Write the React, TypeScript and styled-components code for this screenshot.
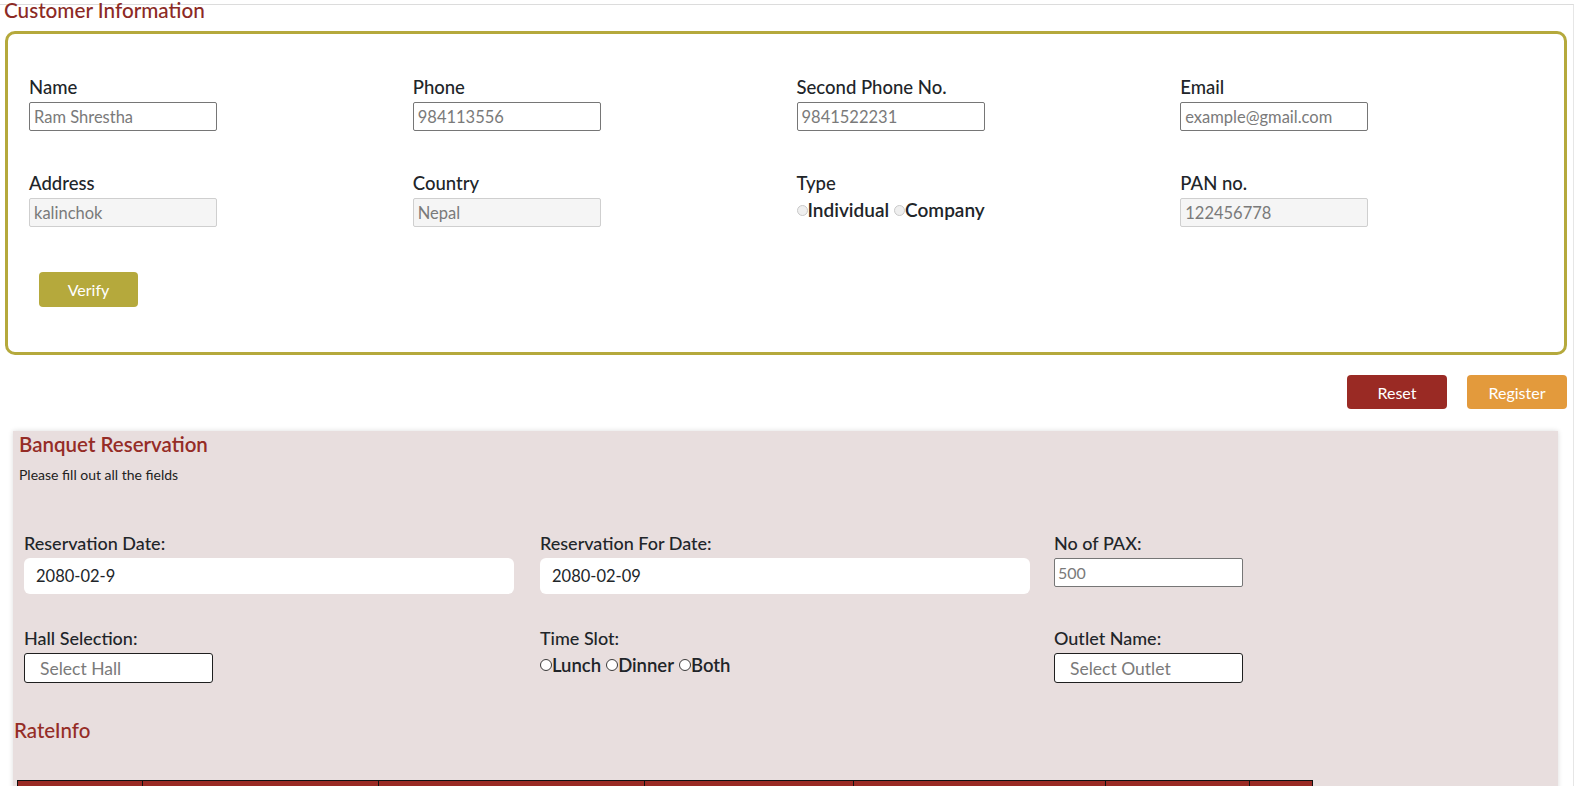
import React from "react";
import styled, { createGlobalStyle, css } from "styled-components";

const GlobalStyle = createGlobalStyle`
  html, body { margin: 0; padding: 0; background: #ffffff; }
  body { font-family: Lato, "Noto Sans", sans-serif; color: #212529; overflow: hidden; }
  * { box-sizing: border-box; }
`;

const Page = styled.div`
  width: 1574px;
  min-height: 782px;
  margin-top: 4px;
  border-top: 1px solid #dcdcdc;
  border-right: 1px solid #e6e6e6;
`;

const PageTitle = styled.h2`
  margin: -5px 0 0 4px;
  font-size: 20.7px;
  line-height: 20px;
  font-weight: 500;
  color: #8c2a25;
`;

const InfoBox = styled.section`
  margin: 11px 0 0 5px;
  width: 1562px;
  border: 3px solid #b5a93c;
  border-radius: 10px;
  padding: 42px 0 45px 21px;
`;

const FieldGrid = styled.div`
  display: grid;
  grid-template-columns: repeat(4, 1fr);
  row-gap: 41px;
`;

const Field = styled.div`
  display: flex;
  flex-direction: column;
  align-items: flex-start;
`;

const Label = styled.label`
  font-size: 18.5px;
  line-height: 22px;
  font-weight: 500;
  color: #212529;
  margin-bottom: 4px;
`;

const TextInput = styled.input<{ $disabled?: boolean }>`
  width: 188px;
  height: 29px;
  padding: 0 4px;
  font-family: inherit;
  font-size: 16.5px;
  border: 1px solid #767676;
  border-radius: 2px;
  background: #fff;
  color: #757575;
  outline: none;
  &::placeholder { color: #7a7a7a; }
  ${(p) =>
    p.$disabled &&
    css`
      background: #f5f5f5;
      border-color: #cfcfcf;
    `}
`;

const RadioRow = styled.div<{ $tight?: boolean }>`
  display: flex;
  align-items: center;
  gap: 5px;
  margin-top: 1px;
`;

const RadioOption = styled.label<{ $size: number }>`
  display: flex;
  align-items: center;
  font-size: ${(p) => p.$size}px;
  font-weight: 600;
  color: #212529;
  line-height: 22px;
`;

const RadioDot = styled.input.attrs({ type: "radio" })<{ $dark?: boolean }>`
  appearance: none;
  width: ${(p) => (p.$dark ? "12px" : "11px")};
  height: ${(p) => (p.$dark ? "12px" : "11px")};
  margin: 0;
  border-radius: 50%;
  border: 1px solid ${(p) => (p.$dark ? "#3a3a3a" : "#c9c9c9")};
  background: ${(p) => (p.$dark ? "#ffffff" : "#efefef")};
`;

const VerifyButton = styled.button`
  margin: 45px 0 0 10px;
  width: 99px;
  height: 35px;
  border: none;
  border-radius: 4px;
  background: #b5a93c;
  color: #fff;
  font-family: inherit;
  font-size: 16px;
`;

const ActionBar = styled.div`
  display: flex;
  justify-content: flex-end;
  gap: 20px;
  width: 1567px;
  margin-top: 20px;
`;

const ActionButton = styled.button<{ $variant: "reset" | "register" }>`
  width: 100px;
  height: 34px;
  border: none;
  border-radius: 4px;
  color: #fff;
  font-family: inherit;
  font-size: 16px;
  background: ${(p) => (p.$variant === "reset" ? "#9a2a24" : "#e39a3c")};
`;

const BanquetCard = styled.section`
  margin: 22px 0 0 13px;
  width: 1545px;
  min-height: 400px;
  background: #e8dede;
  box-shadow: 0 0 5px rgba(0, 0, 0, 0.14);
  padding: 1px 0 0 6px;
`;

const CardTitle = styled.h3`
  margin: 0;
  font-size: 20.5px;
  line-height: 24px;
  font-weight: 600;
  color: #952c26;
`;

const Hint = styled.p`
  margin: 10px 0 0;
  font-size: 14px;
  line-height: 17px;
  color: #222;
`;

const BanquetGrid = styled.div`
  display: grid;
  grid-template-columns: 516px 514px 1fr;
  row-gap: 33px;
  margin: 49px 0 0 5px;
`;

const DateInput = styled.input`
  width: 490px;
  height: 36px;
  border: none;
  border-radius: 6px;
  background: #fff;
  padding: 0 12px;
  font-family: inherit;
  font-size: 16.5px;
  color: #212529;
  outline: none;
`;

const PaxInput = styled.input`
  width: 189px;
  height: 29px;
  border: 1px solid #767676;
  border-radius: 2px;
  background: #fff;
  padding: 0 3px;
  font-family: inherit;
  font-size: 16px;
  color: #777;
  outline: none;
  &::placeholder { color: #7a7a7a; }
`;

const SelectBox = styled.select`
  appearance: none;
  width: 189px;
  height: 30px;
  border: 1px solid #1f1f1f;
  border-radius: 3px;
  background: #fff;
  padding: 0 15px;
  font-family: inherit;
  font-size: 17.5px;
  color: #7a7a7a;
  outline: none;
`;

const BanquetLabel = styled(Label)`
  font-size: 18px;
  margin-bottom: 4px;
`;

const SectionTitle = styled.h3`
  margin: 35px 0 0 -5px;
  font-size: 20.5px;
  line-height: 24px;
  font-weight: 500;
  color: #952c26;
`;

const RateTable = styled.table`
  margin: 38px 0 0 -2px;
  width: 1295px;
  border-collapse: collapse;
  table-layout: fixed;
`;

const HeadCell = styled.th<{ $w: number }>`
  width: ${(p) => p.$w}px;
  height: 40px;
  background: #9a2a24;
  border: 1px solid #111;
`;

const rateCols = [125, 236, 266, 209, 252, 144, 63];

export default function App() {
  return (
    <>
      <GlobalStyle />
      <Page>
        <PageTitle>Customer Information</PageTitle>
        <InfoBox>
          <FieldGrid>
            <Field>
              <Label>Name</Label>
              <TextInput placeholder="Ram Shrestha" />
            </Field>
            <Field>
              <Label>Phone</Label>
              <TextInput placeholder="984113556" />
            </Field>
            <Field>
              <Label>Second Phone No.</Label>
              <TextInput placeholder="9841522231" />
            </Field>
            <Field>
              <Label>Email</Label>
              <TextInput placeholder="example@gmail.com" />
            </Field>
            <Field>
              <Label>Address</Label>
              <TextInput $disabled placeholder="kalinchok" />
            </Field>
            <Field>
              <Label>Country</Label>
              <TextInput $disabled placeholder="Nepal" />
            </Field>
            <Field>
              <Label>Type</Label>
              <RadioRow>
                <RadioOption $size={19}>
                  <RadioDot name="type" />
                  Individual
                </RadioOption>
                <RadioOption $size={19}>
                  <RadioDot name="type" />
                  Company
                </RadioOption>
              </RadioRow>
            </Field>
            <Field>
              <Label>PAN no.</Label>
              <TextInput $disabled placeholder="122456778" />
            </Field>
          </FieldGrid>
          <VerifyButton>Verify</VerifyButton>
        </InfoBox>

        <ActionBar>
          <ActionButton $variant="reset">Reset</ActionButton>
          <ActionButton $variant="register">Register</ActionButton>
        </ActionBar>

        <BanquetCard>
          <CardTitle>Banquet Reservation</CardTitle>
          <Hint>Please fill out all the fields</Hint>
          <BanquetGrid>
            <Field>
              <BanquetLabel>Reservation Date:</BanquetLabel>
              <DateInput defaultValue="2080-02-9" />
            </Field>
            <Field>
              <BanquetLabel>Reservation For Date:</BanquetLabel>
              <DateInput defaultValue="2080-02-09" />
            </Field>
            <Field>
              <BanquetLabel>No of PAX:</BanquetLabel>
              <PaxInput placeholder="500" />
            </Field>
            <Field>
              <BanquetLabel>Hall Selection:</BanquetLabel>
              <SelectBox defaultValue="">
                <option value="">Select Hall</option>
              </SelectBox>
            </Field>
            <Field>
              <BanquetLabel>Time Slot:</BanquetLabel>
              <RadioRow $tight>
                <RadioOption $size={18.5}>
                  <RadioDot $dark name="slot" />
                  Lunch
                </RadioOption>
                <RadioOption $size={18.5}>
                  <RadioDot $dark name="slot" />
                  Dinner
                </RadioOption>
                <RadioOption $size={18.5}>
                  <RadioDot $dark name="slot" />
                  Both
                </RadioOption>
              </RadioRow>
            </Field>
            <Field>
              <BanquetLabel>Outlet Name:</BanquetLabel>
              <SelectBox defaultValue="">
                <option value="">Select Outlet</option>
              </SelectBox>
            </Field>
          </BanquetGrid>
          <SectionTitle>RateInfo</SectionTitle>
          <RateTable>
            <thead>
              <tr>
                {rateCols.map((w, i) => (
                  <HeadCell key={i} $w={w} />
                ))}
              </tr>
            </thead>
          </RateTable>
        </BanquetCard>
      </Page>
    </>
  );
}
